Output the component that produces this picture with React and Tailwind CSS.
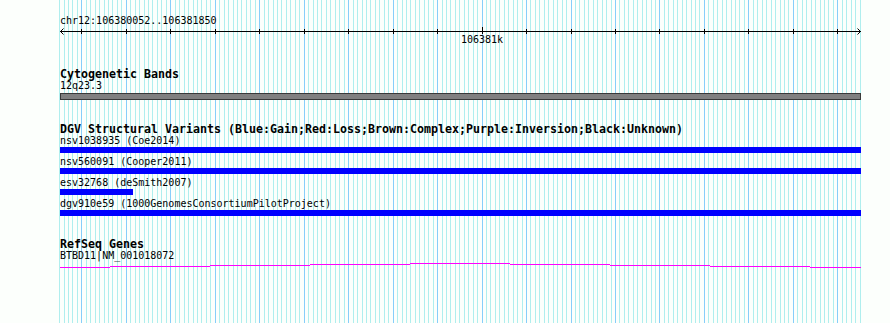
import React from "react";

const START = 106380052;
const END = 106381850;
const toX = (bp) => Math.round(60 + ((bp - START) * 800) / 1799);

function Grid() {
  const lines = [];
  for (let bp = 106380050; bp <= END; bp += 10) {
    lines.push({ x: toX(bp), major: bp % 100 === 0 });
  }
  return (
    <svg className="absolute left-0 top-0" width="890" height="323" shapeRendering="crispEdges">
      {lines.map((l, i) => (
        <rect key={i} x={l.x} y={0} width={1} height={323} fill={l.major ? "#87cefa" : "#afeeee"} />
      ))}
    </svg>
  );
}

function Ruler() {
  const ticks = [];
  for (let bp = 106380100; bp <= END; bp += 100) ticks.push(bp);
  return (
    <svg width="801" height="9" className="block">
      <rect x={0} y={5} width={801} height={1} fill="#000" shapeRendering="crispEdges" />
      {ticks.map((bp) => (
        <rect
          key={bp}
          x={toX(bp) - 60}
          y={bp === 106381000 ? 1 : 3}
          width={1}
          height={bp === 106381000 ? 7 : 5}
          fill="#000"
          shapeRendering="crispEdges"
        />
      ))}
      <path d="M3.5 2.5 L0.5 5.5 L3.5 8.5" stroke="#000" strokeWidth="1" fill="none" />
      <path d="M797.5 2.5 L800.5 5.5 L797.5 8.5" stroke="#000" strokeWidth="1" fill="none" />
    </svg>
  );
}

function GeneLine() {
  const segs = [
    [60, 110, 6],
    [110, 210, 5],
    [210, 310, 4],
    [310, 410, 3],
    [410, 510, 2],
    [510, 610, 3],
    [610, 710, 4],
    [710, 810, 5],
    [810, 861, 6],
  ];
  return (
    <svg width="801" height="8" className="block" shapeRendering="crispEdges">
      {segs.map(([a, b, y], i) => (
        <rect key={i} x={a - 60} y={y} width={b - a} height={1} fill="#ff00ff" />
      ))}
    </svg>
  );
}

const reg = "text-[10px] leading-[10px] h-[10px] whitespace-pre text-black";
const bold = "text-[11.63px] leading-[12px] h-[12px] font-bold whitespace-pre text-black";

function Variant({ label, width }) {
  return (
    <div className="flex flex-col">
      <div className={reg}>{label}</div>
      <div className="mt-[1px] h-[6px] bg-[#0000ff]" style={{ width }} />
    </div>
  );
}

export default function App() {
  return (
    <div className="relative w-[890px] h-[323px] overflow-hidden bg-[#fcfffc] font-['DejaVu_Sans_Mono',monospace]">
      <Grid />
      <div className="relative flex flex-col pl-[60px] pt-[16px] w-[861px]">
        <div className={reg}>chr12:106380052..106381850</div>
        <Ruler />
        <div className={`${reg} ml-[401px]`}>106381k</div>

        <div className={`${bold} mt-[23px]`}>Cytogenetic Bands</div>
        <div className={`${reg} mt-[1px]`}>12q23.3</div>
        <div className="mt-[2px] h-[7px] w-[801px] bg-[#808080] border border-[#3a3a3a]" />

        <div className={`${bold} mt-[23px]`}>
          DGV Structural Variants (Blue:Gain;Red:Loss;Brown:Complex;Purple:Inversion;Black:Unknown)
        </div>
        <div className="mt-[1px] flex flex-col gap-[4px]">
          <Variant label="nsv1038935 (Coe2014)" width={801} />
          <Variant label="nsv560091 (Cooper2011)" width={801} />
          <Variant label="esv32768 (deSmith2007)" width={73} />
          <Variant label="dgv910e59 (1000GenomesConsortiumPilotProject)" width={801} />
        </div>

        <div className={`${bold} mt-[22px]`}>RefSeq Genes</div>
        <div className={`${reg} mt-[1px]`}>BTBD11|NM_001018072</div>
        <GeneLine />
      </div>
    </div>
  );
}
